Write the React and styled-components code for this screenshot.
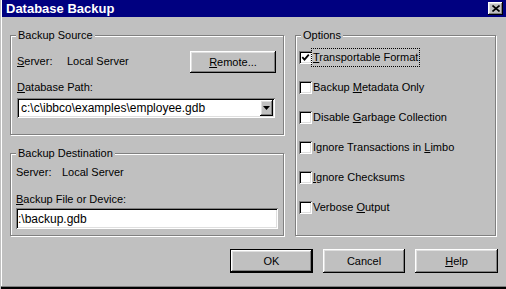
import React from 'react';
import styled, { createGlobalStyle, css } from 'styled-components';

const GlobalStyle = createGlobalStyle`
  html, body {
    margin: 0;
    padding: 0;
    background: #c0c0c0;
  }
  body {
    font-family: 'Liberation Sans', Arial, sans-serif;
    font-size: 11px;
    color: #000;
  }
`;

const raised = css`
  box-shadow: inset -1px -1px 0 #000, inset 1px 1px 0 #fff,
    inset -2px -2px 0 #808080, inset 2px 2px 0 #dfdfdf;
`;

const sunken = css`
  box-shadow: inset 1px 1px 0 #808080, inset -1px -1px 0 #fff,
    inset 2px 2px 0 #000, inset -2px -2px 0 #dfdfdf;
`;

const StyledWindow = styled.div`
  box-sizing: border-box;
  width: 506px;
  height: 289px;
  background: #c0c0c0;
  border-left: 1px solid #c0c0c0;
  padding-left: 1px;
  box-shadow: inset 0 -2px 0 #000, inset 0 -3px 0 #808080, inset 1px 0 0 #fff;
  display: flex;
  flex-direction: column;
`;

const TitleBar = styled.div`
  height: 17px;
  background: #000080;
  display: flex;
  align-items: center;
  justify-content: space-between;
  padding: 0 3px 0 4px;
`;

const TitleText = styled.span`
  color: #fff;
  font-weight: bold;
  font-size: 13px;
  line-height: 17px;
`;

const CloseButton = styled.button`
  width: 15px;
  height: 13px;
  padding: 0;
  border: 0;
  background: #c0c0c0;
  display: flex;
  align-items: center;
  justify-content: center;
  ${raised};
`;

const Body = styled.div`
  display: grid;
  grid-template-columns: 274px 201px;
  column-gap: 11px;
  padding: 18px 0 0 8px;
`;

const Column = styled.div`
  display: flex;
  flex-direction: column;
  gap: 18px;
`;

const GroupBox = styled.div`
  position: relative;
  box-sizing: border-box;
  height: ${({ h }) => h}px;
  border: 1px solid #808080;
  box-shadow: inset 1px 1px 0 #fff, 1px 1px 0 #fff;
  padding: ${({ pad }) => pad};
  display: flex;
  flex-direction: column;
`;

const Legend = styled.span`
  position: absolute;
  top: -7px;
  left: 5px;
  padding: 0 2px;
  line-height: 13px;
  background: #c0c0c0;
`;

const Key = styled.span`
  text-decoration: underline;
`;

const ServerRow = styled.div`
  display: flex;
  align-items: center;
  height: ${({ h }) => h || 13}px;
  line-height: 13px;
`;

const ServerLabel = styled.span`
  width: ${({ w }) => w}px;
`;

const Label = styled.div`
  line-height: 13px;
  margin-top: ${({ mt }) => mt}px;
`;

const PushButton = styled.button`
  box-sizing: border-box;
  width: ${({ w }) => w}px;
  height: ${({ h }) => h}px;
  margin-left: ${({ ml }) => (ml === undefined ? 0 : ml)};
  padding: 0;
  background: #c0c0c0;
  font-family: 'Liberation Sans', Arial, sans-serif;
  font-size: 11px;
  color: #000;
  border: ${({ isDefault }) => (isDefault ? '1px solid #000' : '0')};
  ${raised};
`;

const Combo = styled.div`
  box-sizing: border-box;
  height: 20px;
  margin-top: 4px;
  margin-right: 1px;
  background: #fff;
  display: flex;
  align-items: center;
  padding: 2px 2px 2px 4px;
  ${sunken};
`;

const FieldText = styled.span`
  flex: 1;
  font-size: 12px;
  line-height: 14px;
  white-space: nowrap;
  overflow: hidden;
`;

const DropButton = styled.span`
  box-sizing: border-box;
  width: 13px;
  height: 16px;
  background: #c0c0c0;
  display: flex;
  align-items: center;
  justify-content: center;
  ${raised};
`;

const TextField = styled.div`
  box-sizing: border-box;
  height: 21px;
  margin-top: 2px;
  background: #fff;
  display: flex;
  align-items: center;
  padding: 2px 2px 2px 2px;
  ${sunken};
`;

const OptionList = styled.div`
  display: flex;
  flex-direction: column;
  gap: 17px;
`;

const OptionRow = styled.label`
  display: flex;
  align-items: center;
  height: 13px;
`;

const Check = styled.span`
  box-sizing: border-box;
  width: 13px;
  height: 13px;
  background: #fff;
  display: flex;
  align-items: center;
  justify-content: center;
  ${sunken};
`;

const OptionText = styled.span`
  margin-left: 0;
  padding: 2px 1px;
  line-height: 13px;
  white-space: nowrap;
  outline: ${({ focused }) => (focused ? '1px dotted #000' : 'none')};
  outline-offset: 0;
`;

const ButtonRow = styled.div`
  display: flex;
  justify-content: flex-end;
  gap: 10px;
  padding: 13px 8px 0 0;
`;

const CheckMark = () => (
  <svg width="9" height="9" viewBox="0 0 9 9">
    <path d="M1.3 4.2 L3.5 6.6 L7.8 1.6" fill="none" stroke="#000" strokeWidth="1.8" />
  </svg>
);

const options = [
  { pre: '', key: 'T', post: 'ransportable Format', checked: true, focused: true },
  { pre: 'Backup ', key: 'M', post: 'etadata Only' },
  { pre: 'Disable ', key: 'G', post: 'arbage Collection' },
  { pre: 'Ignore Transactions in ', key: 'L', post: 'imbo' },
  { pre: '', key: 'I', post: 'gnore Checksums' },
  { pre: 'Verbose ', key: 'O', post: 'utput' },
];

const App = () => (
  <>
    <GlobalStyle />
    <StyledWindow>
      <TitleBar>
        <TitleText>Database Backup</TitleText>
        <CloseButton aria-label="Close">
          <svg width="8" height="7" viewBox="0 0 8 7">
            <path d="M0.5 0.5 L7.5 6.5 M7.5 0.5 L0.5 6.5" stroke="#000" strokeWidth="1.6" />
          </svg>
        </CloseButton>
      </TitleBar>
      <Body>
        <Column>
          <GroupBox h={100} pad="15px 7px 0 6px">
            <Legend>Backup Source</Legend>
            <ServerRow h={21}>
              <ServerLabel w={50}>
                <Key>S</Key>erver:
              </ServerLabel>
              <span>Local Server</span>
              <PushButton w={86} h={22} ml="auto">
                <Key>R</Key>emote...
              </PushButton>
            </ServerRow>
            <Label mt={9}>
              <Key>D</Key>atabase Path:
            </Label>
            <Combo>
              <FieldText>c:\c\ibbco\examples\employee.gdb</FieldText>
              <DropButton>
                <svg width="7" height="4" viewBox="0 0 7 4">
                  <path d="M0 0 H7 L3.5 4 Z" fill="#000" />
                </svg>
              </DropButton>
            </Combo>
          </GroupBox>
          <GroupBox h={83} pad="12px 5px 0 5px">
            <Legend>Backup Destination</Legend>
            <ServerRow>
              <ServerLabel w={46}>Server:</ServerLabel>
              <span>Local Server</span>
            </ServerRow>
            <Label mt={14}>
              <Key>B</Key>ackup File or Device:
            </Label>
            <TextField>
              <FieldText>:\backup.gdb</FieldText>
            </TextField>
          </GroupBox>
        </Column>
        <GroupBox h={201} pad="15px 0 0 3px">
          <Legend>Options</Legend>
          <OptionList>
            {options.map((o) => (
              <OptionRow key={o.key}>
                <Check>{o.checked && <CheckMark />}</Check>
                <OptionText focused={o.focused}>
                  {o.pre}
                  <Key>{o.key}</Key>
                  {o.post}
                </OptionText>
              </OptionRow>
            ))}
          </OptionList>
        </GroupBox>
      </Body>
      <ButtonRow>
        <PushButton w={83} h={24} isDefault>
          OK
        </PushButton>
        <PushButton w={82} h={24}>
          Cancel
        </PushButton>
        <PushButton w={83} h={24}>
          <Key>H</Key>elp
        </PushButton>
      </ButtonRow>
    </StyledWindow>
  </>
);

export default App;
